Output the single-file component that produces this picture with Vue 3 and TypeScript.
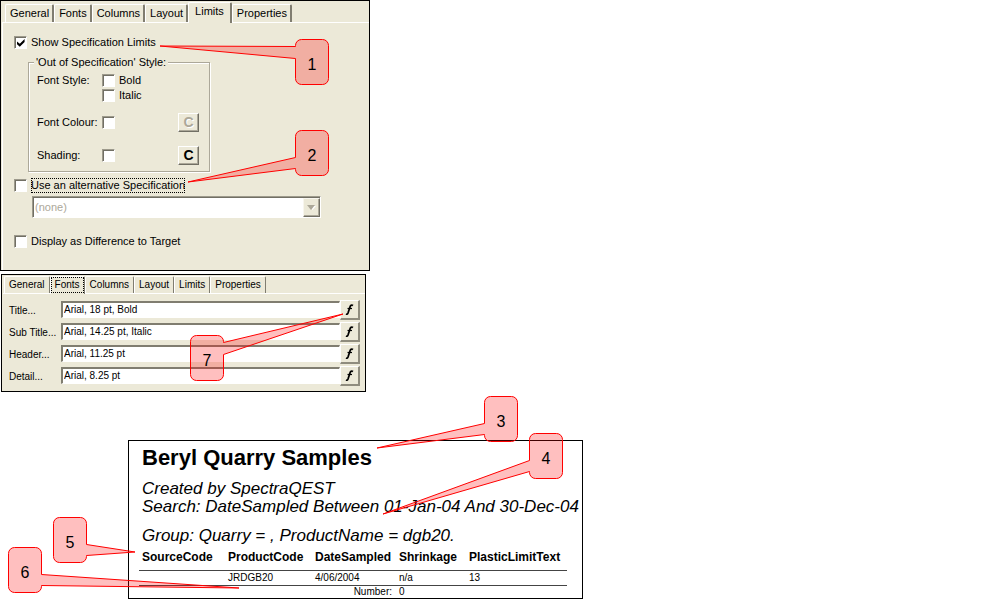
<script setup lang="ts">
import { ref } from 'vue'

interface Callout {
  label: number
  x: number
  y: number
  side: 'left' | 'right'
  from: number
  to: number
  tip: [number, number]
}

const tabs = ['General', 'Fonts', 'Columns', 'Layout', 'Limits', 'Properties']

const fontRows = ref([
  { id: 'title', label: 'Title...', value: 'Arial, 18 pt, Bold' },
  { id: 'subtitle', label: 'Sub Title...', value: 'Arial, 14.25 pt, Italic' },
  { id: 'header', label: 'Header...', value: 'Arial, 11.25 pt' },
  { id: 'detail', label: 'Detail...', value: 'Arial, 8.25 pt' },
])

const showLimits = ref(true)
const bold = ref(false)
const italic = ref(false)
const colour = ref(false)
const shading = ref(false)
const alternative = ref(false)
const difference = ref(false)

const callouts: Callout[] = [
  { label: 1, x: 295, y: 39, side: 'left', from: 7, to: 19, tip: [160, 46] },
  { label: 2, x: 295, y: 130, side: 'left', from: 27, to: 38, tip: [188, 182] },
  { label: 3, x: 484, y: 396, side: 'left', from: 27, to: 38, tip: [377, 448] },
  { label: 4, x: 529, y: 433, side: 'left', from: 27, to: 38, tip: [383, 514] },
  { label: 5, x: 53, y: 517, side: 'right', from: 27, to: 38, tip: [135, 552] },
  { label: 6, x: 8, y: 547, side: 'right', from: 27, to: 38, tip: [239, 588] },
  { label: 7, x: 190, y: 335, side: 'right', from: 7, to: 19, tip: [343, 314] },
]

const boxWidth = 34
const boxHeight = 46
const radius = 6

function outline(c: Callout): string {
  const l = c.x + 0.5
  const t = c.y + 0.5
  const r = l + boxWidth - 1
  const b = t + boxHeight - 1
  const arc = (x: number, y: number) => `A${radius} ${radius} 0 0 1 ${x} ${y}`
  const tip = `L${c.tip[0]} ${c.tip[1]}`
  const right = c.side === 'right' ? `V${t + c.from} ${tip} L${r} ${t + c.to}` : ''
  const left = c.side === 'left' ? `V${t + c.to} ${tip} L${l} ${t + c.from}` : ''
  return [
    `M${l + radius} ${t} H${r - radius}`,
    arc(r, t + radius),
    right,
    `V${b - radius}`,
    arc(r - radius, b),
    `H${l + radius}`,
    arc(l, b - radius),
    left,
    `V${t + radius}`,
    arc(l + radius, t),
    'Z',
  ].join(' ')
}
</script>

<template>
  <main class="figure">
    <section class="panel limits">
      <nav class="tabs">
        <button v-for="t in tabs" :key="t" type="button" class="tab" :class="{ active: t === 'Limits' }">{{ t }}</button>
      </nav>
      <div class="body">
        <label class="check"><input v-model="showLimits" type="checkbox" />Show Specification Limits</label>
        <fieldset class="group">
          <legend>'Out of Specification' Style:</legend>
          <div class="row style-row">
            <span class="name">Font Style:</span>
            <div class="options">
              <label class="check"><input v-model="bold" type="checkbox" />Bold</label>
              <label class="check"><input v-model="italic" type="checkbox" />Italic</label>
            </div>
          </div>
          <div class="row">
            <label class="name" for="colour">Font Colour:</label>
            <input id="colour" v-model="colour" type="checkbox" />
            <button type="button" class="pick" disabled>C</button>
          </div>
          <div class="row">
            <label class="name" for="shading">Shading:</label>
            <input id="shading" v-model="shading" type="checkbox" />
            <button type="button" class="pick">C</button>
          </div>
        </fieldset>
        <label class="check"><input v-model="alternative" type="checkbox" /><span class="focus">Use an alternative Specification</span></label>
        <div class="combo">
          <select disabled aria-label="Alternative specification">
            <option>(none)</option>
          </select>
          <span class="arrow">
            <svg width="9" height="6" viewBox="0 0 9 6"><path d="M2 1h7L5.500 5z" fill="#fff" /><path d="M0 0h8L4 5z" fill="#aca899" /></svg>
          </span>
        </div>
        <label class="check"><input v-model="difference" type="checkbox" />Display as Difference to Target</label>
      </div>
    </section>

    <section class="panel fonts">
      <nav class="tabs">
        <button v-for="t in tabs" :key="t" type="button" class="tab" :class="{ active: t === 'Fonts' }">{{ t }}</button>
      </nav>
      <div class="font-rows">
        <div v-for="row in fontRows" :key="row.id" class="font-row">
          <label :for="row.id">{{ row.label }}</label>
          <input :id="row.id" v-model="row.value" type="text" />
          <button type="button" class="font-button" aria-label="Choose font">
            <svg width="9" height="11" viewBox="0 0 9 11" fill="none" stroke="#000"><path d="M8 1.500C6.500.5 5.500 1.500 5 3L3 9C2.600 10 2 10.500 1 10" stroke-width="1.800" /><path d="M2.500 4.500h4.500" stroke-width="1.200" /></svg>
          </button>
        </div>
      </div>
    </section>

    <section class="report">
      <h1>Beryl Quarry Samples</h1>
      <p>Created by SpectraQEST</p>
      <p>Search: DateSampled Between 01-Jan-04 And 30-Dec-04</p>
      <p class="grouping">Group: Quarry = , ProductName = dgb20.</p>
      <table>
        <colgroup>
          <col class="c1" /><col class="c2" /><col class="c3" /><col class="c4" /><col class="c5" />
        </colgroup>
        <thead>
          <tr><th>SourceCode</th><th>ProductCode</th><th>DateSampled</th><th>Shrinkage</th><th>PlasticLimitText</th></tr>
        </thead>
        <tbody>
          <tr><td></td><td>JRDGB20</td><td>4/06/2004</td><td>n/a</td><td>13</td></tr>
        </tbody>
        <tfoot>
          <tr><td></td><td></td><td class="count">Number:</td><td>0</td><td></td></tr>
        </tfoot>
      </table>
    </section>

    <svg class="callouts">
      <g v-for="c in callouts" :key="c.label">
        <path :d="outline(c)" />
        <text :x="c.x + boxWidth / 2" :y="c.y + 31">{{ c.label }}</text>
      </g>
    </svg>
  </main>
</template>

<style>
body {
  background: #fff;
}
</style>

<style scoped>
.figure {
  position: relative;
  font: 11px/15px "Liberation Sans", Arial, sans-serif;
  color: #000;
}
.figure * {
  box-sizing: border-box;
}
button,
input,
select {
  font: inherit;
  color: inherit;
  margin: 0;
}
.panel {
  background: #ece9d8;
  border: 1px solid #000;
}
.limits {
  max-width: 370px;
}
.tabs {
  display: flex;
  align-items: flex-end;
  height: 22px;
  padding-left: 3px;
  margin-left: 1px;
  border-bottom: 1px solid #fff;
}
.tab {
  height: 18px;
  padding: 0 3px 0 4px;
  border: 1px solid #fff;
  border-right: 2px solid #807d70;
  border-bottom: 0;
  border-radius: 2px 2px 0 0;
  background: #ece9d8;
  white-space: nowrap;
}
.tab.active {
  height: 21px;
  padding: 0 6px 3px;
  margin-bottom: -1px;
}
.body {
  padding: 12px 12px 21px 11px;
  margin-left: 1px;
  border-left: 1px solid #fff;
}
.check {
  display: flex;
  align-items: center;
  gap: 4px;
  height: 15px;
}
input[type="checkbox"] {
  appearance: none;
  flex: none;
  width: 13px;
  height: 13px;
  border: 1px solid #fff;
  border-top-color: #9d9a8c;
  border-left-color: #9d9a8c;
  background: #fff;
  box-shadow: inset 1px 1px 0 #716f64;
}
input[type="checkbox"]:checked::after {
  content: "";
  display: block;
  width: 8px;
  height: 8px;
  margin: 2px;
  background: #000;
  clip-path: polygon(0 30%, 35% 60%, 95% 0, 95% 38%, 35% 98%, 0 65%);
}
.group {
  width: 182px;
  margin: 5px 0 6px 14px;
  padding: 4px 10px 6px 8px;
  border: 1px solid #aca899;
  box-shadow: 1px 1px 0 #fff, inset 1px 1px 0 #fff;
}
legend {
  padding: 0 2px;
  margin-left: -3px;
  line-height: 14px;
  background: #ece9d8;
}
.row {
  display: flex;
  align-items: center;
  height: 20px;
  margin-top: 13px;
}
.style-row {
  align-items: flex-start;
  height: 30px;
  margin-top: 0;
}
.style-row + .row {
  margin-top: 9px;
}
.name {
  width: 65px;
  white-space: nowrap;
}
.pick {
  width: 21px;
  height: 19px;
  margin-left: auto;
  padding: 0;
  border: 1px solid #fff;
  border-right-color: #716f64;
  border-bottom-color: #716f64;
  background: #ece9d8;
  box-shadow: inset -1px -1px 0 #aca899;
  font-size: 14px;
  font-weight: bold;
  line-height: 16px;
}
.pick:disabled {
  color: #aca899;
  text-shadow: 1px 1px 0 #fff;
}
.focus {
  height: 15px;
  outline: 1px dotted #000;
  outline-offset: -1px;
}
.combo {
  position: relative;
  max-width: 289px;
  margin: 3px 0 16px 18px;
}
.combo select {
  display: block;
  appearance: none;
  width: 100%;
  height: 22px;
  padding: 0 20px 0 2px;
  border: 1px solid #fff;
  border-top-color: #9d9a8c;
  border-left-color: #9d9a8c;
  border-radius: 0;
  background: #fff;
  box-shadow: inset 1px 1px 0 #716f64;
  color: #aca899;
  opacity: 1;
}
.arrow {
  position: absolute;
  top: 2px;
  right: 1px;
  bottom: 1px;
  width: 17px;
  display: grid;
  place-items: center;
  background: #ece9d8;
  border: 1px solid #f8f6ee;
  border-right-color: #716f64;
  border-bottom-color: #716f64;
  box-shadow: inset -1px -1px 0 #aca899;
}

.fonts {
  max-width: 365px;
  margin: 3px 0 0 1px;
  font-size: 10px;
}
.fonts .tabs {
  height: 19px;
  padding-left: 1px;
}
.fonts .tab {
  height: 17px;
  padding: 0 4px 1px;
  border-right-width: 1px;
}
.fonts .tab.active {
  height: 18px;
  padding: 0 4px 3px;
  outline: 1px dotted #000;
  outline-offset: -2px;
}
.font-rows {
  display: grid;
  gap: 2px;
  padding: 6px 5px 5px 7px;
}
.font-row {
  display: grid;
  grid-template-columns: 52px 1fr 20px;
  align-items: start;
  height: 20px;
}
.font-row label {
  padding-top: 3px;
  white-space: nowrap;
}
.font-row input {
  min-width: 0;
  height: 17px;
  margin-top: 1px;
  padding: 0 1px 2px;
  border: 1px solid #fff;
  border-top: 2px solid #807d70;
  border-left: 2px solid #807d70;
  background: #fff;
}
.font-button {
  display: grid;
  place-items: center;
  height: 20px;
  padding: 0;
  border: 1px solid #fff;
  border-right: 2px solid #8f8c7e;
  border-bottom: 2px solid #8f8c7e;
  background: #ece9d8;
}

.report {
  max-width: 455px;
  margin: 48px 0 0 128px;
  padding: 4px 15px 0 10px;
  border: 1px solid #000;
  background: #fff;
}
.report h1 {
  margin: 0 0 9px 3px;
  font-size: 22px;
  line-height: 26px;
}
.report p {
  margin: 0 0 0 3px;
  font-size: 17px;
  font-style: italic;
  line-height: 18px;
  white-space: nowrap;
}
.report .grouping {
  margin-top: 11px;
}
.report table {
  width: 100%;
  margin-top: 2px;
  table-layout: fixed;
  border-collapse: collapse;
  font-size: 10px;
}
.c1 { width: 86px; }
.c2 { width: 87px; }
.c3 { width: 84px; }
.c4 { width: 70px; }
th,
td {
  padding: 0 0 0 3px;
  text-align: left;
  white-space: nowrap;
}
th {
  height: 23px;
  padding-bottom: 2px;
  font-size: 12px;
  border-bottom: 1px solid #444;
}
td {
  height: 15px;
  line-height: 12px;
}
tfoot td {
  height: 12px;
}
tbody td {
  border-bottom: 1px solid #444;
}
.report .count {
  padding-right: 4px;
  text-align: right;
}

.callouts {
  position: absolute;
  inset: 0;
  width: 100%;
  height: 100%;
  overflow: visible;
  pointer-events: none;
}
.callouts path {
  fill: rgba(255, 0, 0, 0.25);
  stroke: #f00;
  stroke-width: 1;
}
.callouts text {
  font-size: 16px;
  text-anchor: middle;
}
</style>
